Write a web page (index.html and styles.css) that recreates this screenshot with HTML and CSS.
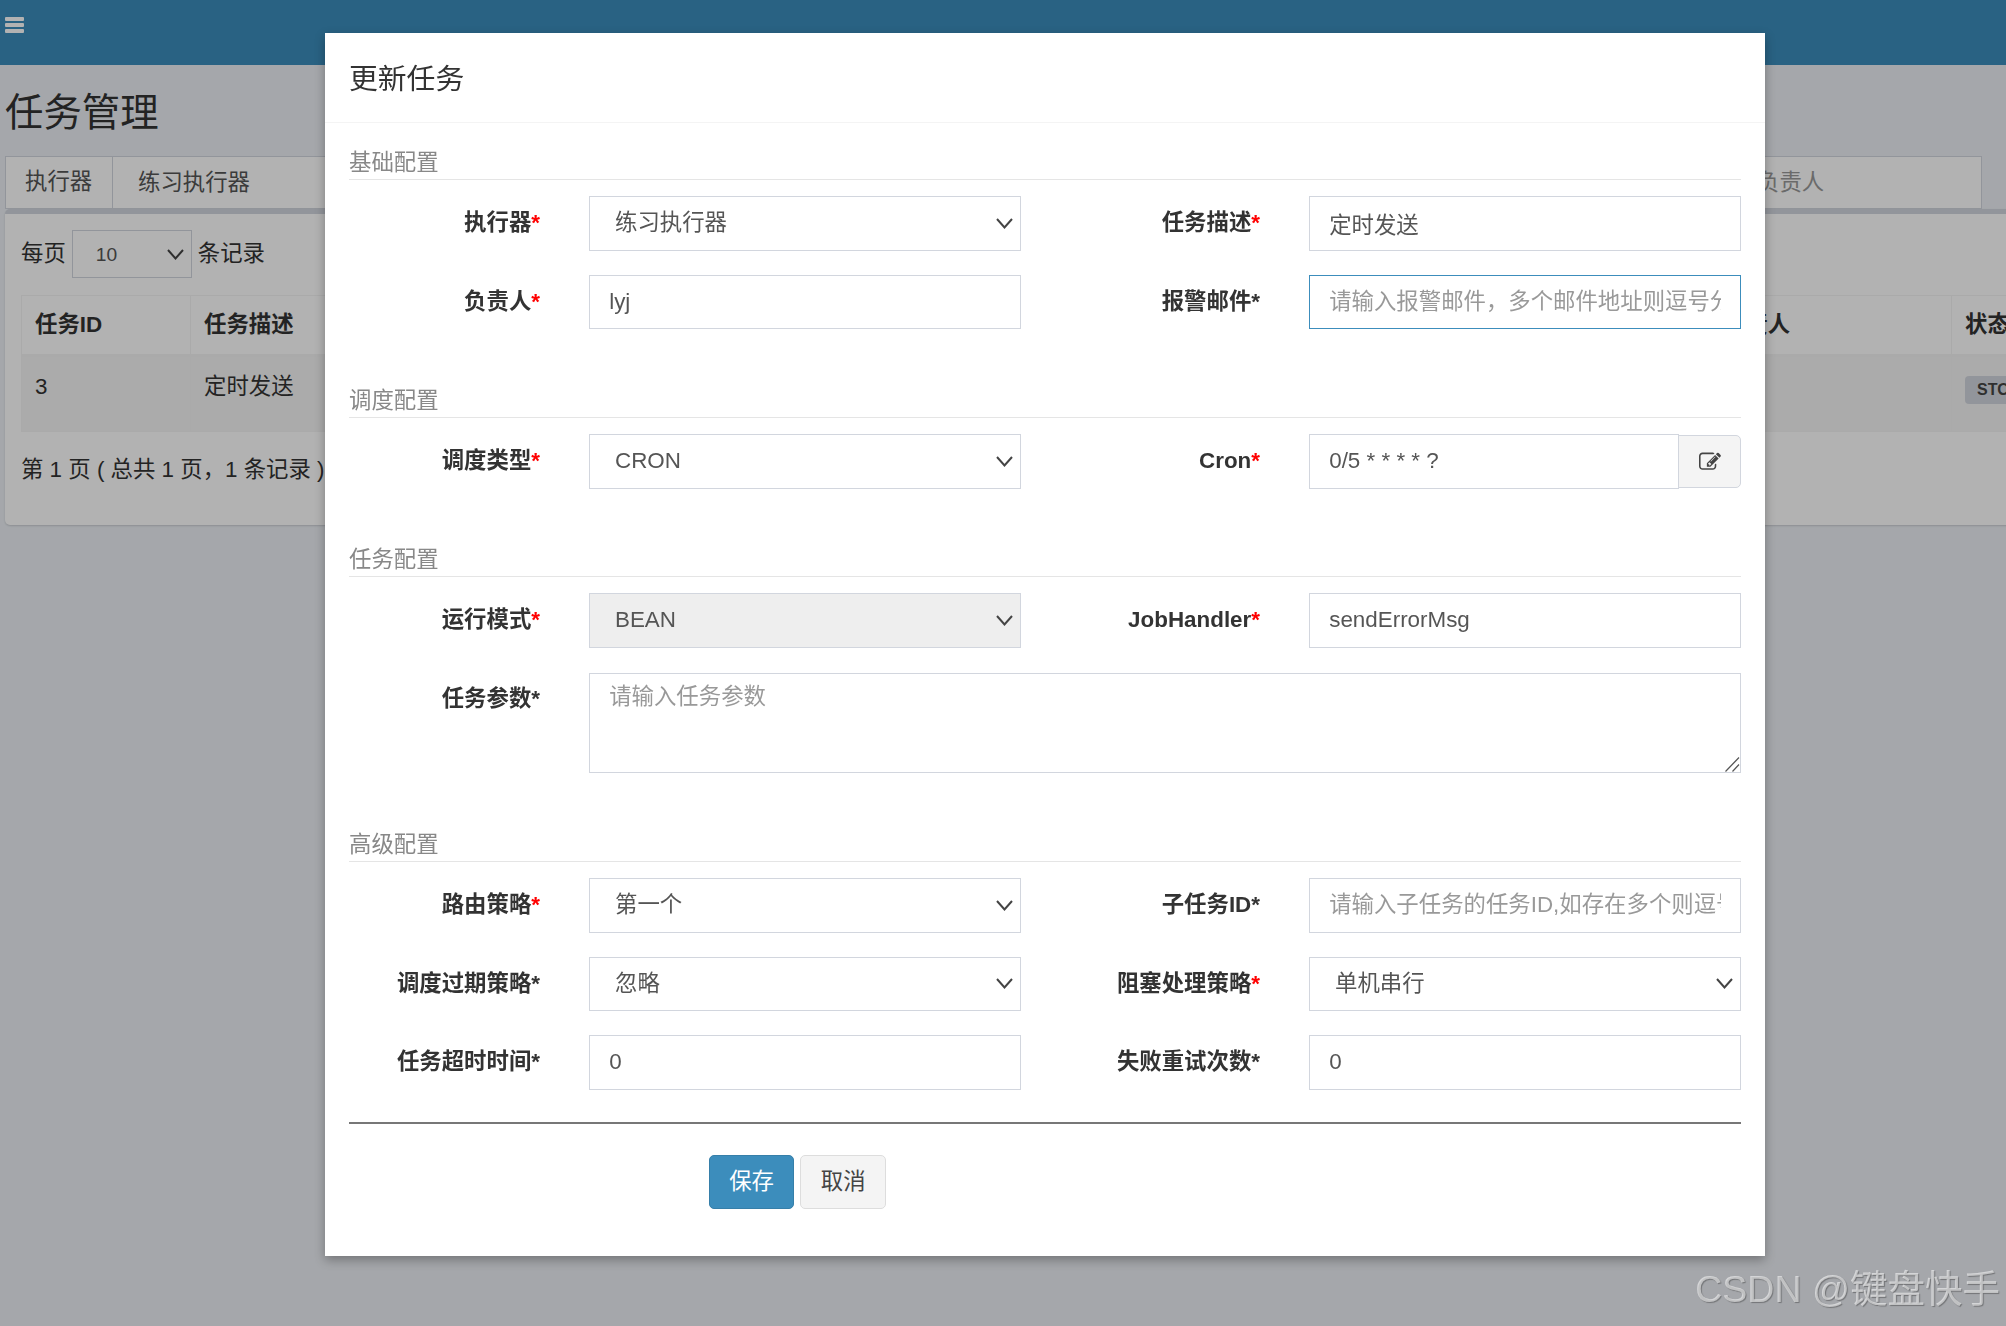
FILE: index.html
```html
<!DOCTYPE html>
<html lang="zh-CN">
<head>
<meta charset="utf-8">
<title>任务管理</title>
<link rel="stylesheet" href="styles.css">
</head>
<body>
<header class="topbar">
  <svg class="menu-icon" viewBox="0 0 19 16" width="19" height="16"><rect width="19" height="4" rx="1"/><rect y="6" width="19" height="4" rx="1"/><rect y="12" width="19" height="4" rx="1"/></svg>
</header>
<main class="content">
  <h1 class="page-title">任务管理</h1>
  <div class="filters">
    <span class="filter-addon">执行器</span>
    <span class="filter-value">练习执行器</span>
    <span class="filter-owner">负责人</span>
  </div>
  <section class="box">
    <div class="length-bar">
      <span>每页</span>
      <select class="length-select"><option>10</option></select>
      <span>条记录</span>
    </div>
    <table class="jobs">
      <colgroup>
        <col class="c-id"><col class="c-desc"><col class="c-type"><col class="c-mode"><col class="c-owner"><col class="c-status"><col class="c-ops">
      </colgroup>
      <thead>
        <tr><th>任务ID</th><th>任务描述</th><th>调度类型</th><th>运行模式</th><th>负责人</th><th>状态</th><th>操作</th></tr>
      </thead>
      <tbody>
        <tr><td>3</td><td>定时发送</td><td>CRON</td><td>BEAN</td><td>lyj</td><td><span class="badge">STOP</span></td><td></td></tr>
      </tbody>
    </table>
    <p class="pager">第 1 页 ( 总共 1 页，1 条记录 )</p>
  </section>
</main>

<div class="backdrop"></div>

<div class="modal">
  <div class="modal-header">更新任务</div>
  <form class="modal-body">
    <div class="section">
      <div class="section-title">基础配置</div>
      <div class="fields">
        <label class="lab">执行器<b class="req">*</b></label>
        <select class="ctl"><option>练习执行器</option></select>
        <label class="lab">任务描述<b class="req">*</b></label>
        <input class="ctl" value="定时发送">
        <label class="lab">负责人<b class="req">*</b></label>
        <input class="ctl" value="lyj">
        <label class="lab">报警邮件*</label>
        <input class="ctl focus" placeholder="请输入报警邮件，多个邮件地址则逗号分隔">
      </div>
    </div>
    <div class="section">
      <div class="section-title">调度配置</div>
      <div class="fields">
        <label class="lab">调度类型<b class="req">*</b></label>
        <select class="ctl"><option>CRON</option></select>
        <label class="lab">Cron<b class="req">*</b></label>
        <div class="group">
          <input class="ctl group-input" value="0/5 * * * * ?">
          <span class="addon">
            <svg viewBox="0 0 1792 1792" width="22" height="22"><path d="M888 1184l116-116-152-152-116 116v56h96v96h56zm440-720q-16-16-33 1l-350 350q-17 17-1 33t33-1l350-350q17-17 1-33zm80 594v190q0 119-84.500 203.500t-203.500 84.500h-832q-119 0-203.500-84.500t-84.500-203.500v-832q0-119 84.500-203.500t203.500-84.500h832q63 0 117 25 15 7 18 23 3 17-9 29l-49 49q-14 14-32 8-23-6-45-6h-832q-66 0-113 47t-47 113v832q0 66 47 113t113 47h832q66 0 113-47t47-113v-126q0-13 9-22l64-64q15-15 35-7t20 29zm-96-738l288 288-672 672h-288v-288zm444 132l-92 92-288-288 92-92q28-28 68-28t68 28l152 152q28 28 28 68t-28 68z"/></svg>
          </span>
        </div>
      </div>
    </div>
    <div class="section section-task">
      <div class="section-title">任务配置</div>
      <div class="fields fields-task">
        <label class="lab">运行模式<b class="req">*</b></label>
        <select class="ctl readonly" disabled><option>BEAN</option></select>
        <label class="lab">JobHandler<b class="req">*</b></label>
        <input class="ctl" value="sendErrorMsg">
        <label class="lab lab-top">任务参数*</label>
        <textarea class="area" placeholder="请输入任务参数"></textarea>
      </div>
    </div>
    <div class="section section-adv">
      <div class="section-title">高级配置</div>
      <div class="fields">
        <label class="lab">路由策略<b class="req">*</b></label>
        <select class="ctl"><option>第一个</option></select>
        <label class="lab">子任务ID*</label>
        <input class="ctl" placeholder="请输入子任务的任务ID,如存在多个则逗号分隔">
        <label class="lab">调度过期策略*</label>
        <select class="ctl"><option>忽略</option></select>
        <label class="lab">阻塞处理策略<b class="req">*</b></label>
        <select class="ctl"><option>单机串行</option></select>
        <label class="lab">任务超时时间*</label>
        <input class="ctl" value="0">
        <label class="lab">失败重试次数*</label>
        <input class="ctl" value="0">
      </div>
    </div>
    <hr class="rule">
    <div class="actions">
      <button type="button" class="btn btn-primary">保存</button>
      <button type="button" class="btn btn-default">取消</button>
    </div>
  </form>
</div>

<div class="watermark">CSDN @键盘快手</div>
</body>
</html>
```
FILE: styles.css
```css
* { box-sizing: border-box; }
html, body { margin: 0; height: 100%; overflow: hidden; }
body {
  width: 2006px;
  height: 1326px;
  position: relative;
  background: #ecf0f5;
  color: #333;
  font: 22.4px/32px "Liberation Sans", "Noto Sans CJK SC", sans-serif;
}

/* page behind the dialog */
.topbar { height: 65px; background: #3c8dbc; padding: 17px 5px 0; }
.menu-icon { display: block; fill: #fff; }
.content { width: 2300px; padding: 27px 0 0 5px; }
.page-title { margin: 0 0 22px; font-size: 38.4px; line-height: 42px; font-weight: 400; }

.filters {
  display: flex;
  align-items: center;
  width: 1977px;
  height: 53px;
  background: #fff;
  border: 1px solid #d2d6de;
  color: #555;
}
.filter-addon { width: 107px; height: 100%; padding: 9px 0 0 19px; border-right: 1px solid #d2d6de; background: #fff; }
.filter-value { margin-left: 25px; width: 1619px; }
.filter-owner { color: #999; }

.box {
  width: 2250px;
  height: 316px;
  background: #fff;
  border-top: 5px solid #d2d6de;
  border-radius: 5px;
  padding: 16px;
  box-shadow: 0 1px 2px rgba(0, 0, 0, .15);
}
.length-bar { display: flex; align-items: center; gap: 6px; height: 48px; }
.length-select {
  appearance: none;
  width: 120px;
  height: 48px;
  padding-left: 23px;
  border: 1px solid #d2d6de;
  border-radius: 0;
  color: #555;
  font: 19.2px "Liberation Sans", "Noto Sans CJK SC", sans-serif;
  background: #fff url("data:image/svg+xml,%3Csvg xmlns='http://www.w3.org/2000/svg' width='17' height='11'%3E%3Cpath d='M1 1l7.500 8.500L16 1' fill='none' stroke='%23444' stroke-width='2'/%3E%3C/svg%3E") no-repeat right 7px center;
}
.jobs { margin-top: 17px; table-layout: fixed; width: 2200px; border-collapse: collapse; border: 1px solid #f4f4f4; }
.c-id { width: 169px; }
.c-desc { width: 506px; }
.c-type { width: 506px; }
.c-mode { width: 507px; }
.c-owner { width: 242px; }
.c-status { width: 130px; }
.jobs th, .jobs td { border: 1px solid #f4f4f4; text-align: left; vertical-align: top; padding: 0 13px; }
.jobs th { height: 60px; padding-top: 13px; border-bottom: 3px solid #f4f4f4; font-weight: 700; }
.jobs td { height: 76px; padding-top: 14px; background: #f5f5f5; color: #333; }
.badge {
  display: block;
  width: 88px;
  height: 28px;
  margin-top: 5px;
  padding: 0 12px;
  border-radius: 4px;
  background: #d2d6de;
  color: #444;
  font-size: 16px;
  font-weight: 700;
  line-height: 28px;
}
.pager { margin: 22px 0 0; }

.backdrop { position: fixed; inset: 0; background: rgba(0, 0, 0, .3); }

/* dialog */
.modal {
  position: absolute;
  left: 325px;
  top: 33px;
  width: 1440px;
  height: 1223px;
  background: #fff;
  box-shadow: 0 4px 10px rgba(0, 0, 0, .3);
}
.modal-header {
  display: flex;
  align-items: center;
  height: 90px;
  padding: 2px 24px 0;
  border-bottom: 1px solid #f4f4f4;
  font-size: 28.8px;
}
.modal-body { padding: 24px 24px 0; }

.section + .section { margin-top: 56px; }
.section-task { margin-top: 55.5px !important; }
.section-adv { margin-top: 56.5px !important; }
.section-title {
  height: 33px;
  margin-bottom: 16px;
  border-bottom: 1px solid #e5e5e5;
  color: #888;
  line-height: 32px;
}
.fields {
  display: grid;
  grid-template-columns: 240px 432px 288px 432px;
  row-gap: 24px;
  grid-auto-rows: 54.5px;
}
.fields-task { row-gap: 25px; grid-template-rows: 54.5px 100px; }

.lab {
  display: flex;
  align-items: center;
  justify-content: flex-end;
  padding-right: 49px;
  font-weight: 700;
  color: #333;
  letter-spacing: 0;
}
.lab-top { align-items: flex-start; padding-top: 10px; }
.req { color: #f00; font-weight: 700; }

.ctl, .area {
  width: 100%;
  border: 1px solid #d2d6de;
  border-radius: 0;
  outline: none;
  color: #555;
  font: 22.4px/32px "Liberation Sans", "Noto Sans CJK SC", sans-serif;
  background-color: #fff;
}
input.ctl { height: 54.5px; padding: 0 19.2px; }
select.ctl {
  appearance: none;
  height: 54.5px;
  padding: 0 40px 0 25px;
  background-image: url("data:image/svg+xml,%3Csvg xmlns='http://www.w3.org/2000/svg' width='17' height='11'%3E%3Cpath d='M1 1l7.500 8.500L16 1' fill='none' stroke='%23444' stroke-width='2'/%3E%3C/svg%3E");
  background-repeat: no-repeat;
  background-position: right 7px center;
}
.ctl::placeholder, .area::placeholder { color: #999; opacity: 1; }
.focus { border-color: #3c8dbc; }
.readonly { background-color: #eee; opacity: 1; color: #555; }
.area { grid-column: 2 / 5; height: 100px; padding: 7px 19.2px; display: block; }
.area::-webkit-resizer {
  background: url("data:image/svg+xml,%3Csvg xmlns='http://www.w3.org/2000/svg' width='15' height='15'%3E%3Cpath d='M0.500 14.500L14 0.500M7.500 14.500L14 7.500' fill='none' stroke='%23555' stroke-width='1.200'/%3E%3C/svg%3E") no-repeat;
}

.group { display: flex; }
.group-input { flex: 1; min-width: 0; }
.addon {
  display: flex;
  align-items: center;
  justify-content: center;
  width: 63px;
  height: 53px;
  margin-top: 1px;
  margin-left: -1px;
  background: #f4f4f4;
  border: 1px solid #d2d6de;
  border-radius: 0 5px 5px 0;
  fill: #444;
}

.rule { margin: 32px 0 0; height: 2px; border: 0; background: #777; }
.actions { display: flex; gap: 6px; margin: 31px 0 0 360px; }
.btn {
  height: 54px;
  padding: 0 19.2px 5px;
  border: 1px solid;
  border-radius: 5px;
  font: 22.4px "Liberation Sans", "Noto Sans CJK SC", sans-serif;
}
.btn-primary { background: #3c8dbc; border-color: #367fa9; color: #fff; }
.btn-default { background: #f4f4f4; border-color: #ddd; color: #444; padding-left: 19.6px; padding-right: 19.6px; }

.watermark {
  position: absolute;
  right: 6px;
  top: 1267px;
  font-size: 37.500px;
  line-height: 44px;
  color: rgba(255, 255, 255, .55);
  text-shadow: 1px 1px 1px rgba(0, 0, 0, .3);
  white-space: nowrap;
}
```
